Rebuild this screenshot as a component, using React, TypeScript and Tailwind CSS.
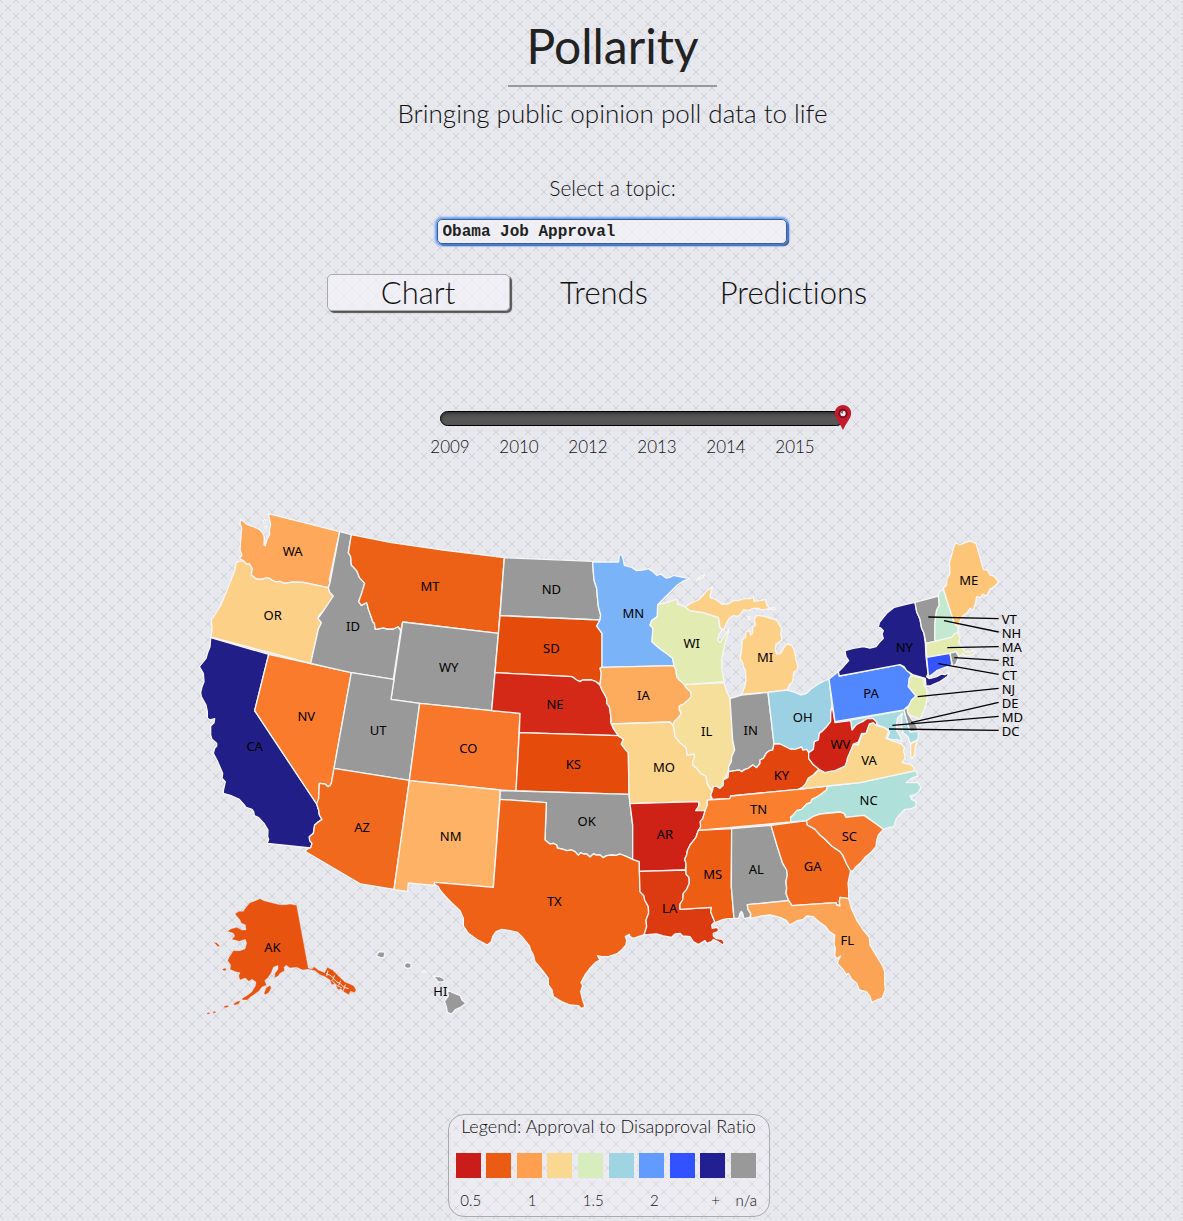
import { useState } from "react";

type StateShape = { id: string; fill: string; d: string; label?: [number, number] };

const GRAY = "#999999";

const STATES: StateShape[] = [
  { id: "WA", fill: "#fda85a", label: [308, 154], d: "M152,58 172,74 190,80 208,88 218,98 223,112 222,135 226,137 231,118 239,103 238,90 242,75 238,55 235,41 449,95 418,240 420,248 415,263 340,247 310,246 282,250 270,244 258,246 245,240 240,236 230,233 215,238 198,237 184,225 186,205 178,192 170,192 160,182 148,176 156,165 150,150 152,120 155,85 150,70ZM219,62 225,58 227,66 221,68ZM224,80 230,78 228,85Z" },
  { id: "OR", fill: "#fdd088", label: [248, 346], d: "M145,184 160,182 170,192 178,192 186,205 184,225 198,237 215,238 230,233 240,236 245,240 258,246 270,244 282,250 310,246 340,247 415,263 419,277 430,288 418,308 400,333 388,345 384,355 394,368 385,388 362,490 62,411 66,392 64,360 76,342 93,315 116,258 134,212 138,190Z" },
  { id: "CA", fill: "#221e87", label: [194, 740], d: "M62,413 236,463 194,632 380,912 386,930 388,945 396,958 382,968 374,975 370,1000 358,1010 359,1022 366,1030 362,1044 232,1030 236,1018 233,1010 234,990 222,970 206,953 193,947 191,935 186,928 168,922 163,915 148,898 126,888 100,880 100,872 106,845 96,835 98,820 83,785 70,760 74,745 80,738 80,730 66,718 62,705 62,678 72,668 74,656 60,660 52,654 52,635 48,615 34,590 32,578 36,560 42,545 40,520 28,500 48,475 54,455 60,440Z" },
  { id: "NV", fill: "#f97b2b", label: [349, 649], d: "M236,463 484,518 432,805 424,850 420,857 414,860 405,852 388,850 386,895 382,915 194,632Z" },
  { id: "ID", fill: GRAY, label: [489, 380], d: "M449,95 484,104 475,158 482,170 484,195 500,212 508,232 524,250 515,280 506,305 514,316 530,308 536,330 545,355 548,365 553,370 556,388 580,384 592,387 610,387 625,380 632,392 610,538 484,518 362,490 385,388 394,368 384,355 400,333 430,288 419,277 415,263 420,248Z" },
  { id: "MT", fill: "#ed6117", label: [720, 259], d: "M484,104 600,127 760,150 943,173 925,400 638,366 632,392 625,380 610,387 592,387 580,384 556,388 553,370 548,365 545,355 536,330 530,308 514,316 506,305 515,280 524,250 508,232 500,212 484,195 482,170 475,158Z" },
  { id: "WY", fill: GRAY, label: [776, 501], d: "M638,366 925,400 905,632 689,610 603,598Z" },
  { id: "UT", fill: GRAY, label: [564, 691], d: "M484,518 612,538 603,598 689,610 658,841 432,805Z" },
  { id: "CO", fill: "#f8772a", label: [835, 745], d: "M689,610 905,632 990,640 978,873 931,870 658,842Z" },
  { id: "AZ", fill: "#f0691d", label: [516, 982], d: "M432,805 658,841 612,1168 512,1152 346,1055 350,1048 362,1043 366,1030 359,1022 358,1010 370,1000 374,975 382,968 396,958 388,945 386,930 380,912 386,895 388,850 405,852 414,860 420,857 424,850Z" },
  { id: "NM", fill: "#feb265", label: [782, 1009], d: "M658,842 931,870 910,1162 735,1147 732,1156 655,1149 653,1174 612,1169Z" },
  { id: "ND", fill: GRAY, label: [1084, 268], d: "M943,173 1208,184 1210,215 1212,240 1220,265 1222,290 1225,320 1232,345 1230,360 930,347Z" },
  { id: "SD", fill: "#e54b0b", label: [1084, 445], d: "M930,347 1230,360 1220,378 1236,400 1236,500 1230,505 1234,520 1230,553 1218,545 1205,540 1178,540 1170,545 1160,540 1146,530 915,518Z" },
  { id: "NE", fill: "#d32916", label: [1095, 613], d: "M915,518 1146,530 1160,540 1170,545 1178,540 1205,540 1218,545 1230,555 1236,570 1242,580 1250,595 1250,610 1258,620 1262,645 1262,665 1270,685 1285,707 988,698 990,640 905,632Z" },
  { id: "KS", fill: "#e54b0b", label: [1150, 793], d: "M988,698 1285,707 1292,712 1300,718 1294,732 1306,748 1315,758 1317,883 978,873Z" },
  { id: "OK", fill: GRAY, label: [1190, 964], d: "M931,872 978,873 1317,883 1320,910 1328,975 1328,1078 1310,1070 1290,1062 1278,1066 1265,1065 1250,1067 1240,1073 1230,1065 1220,1065 1210,1062 1200,1071 1190,1062 1180,1062 1172,1058 1165,1066 1155,1055 1145,1050 1130,1052 1120,1048 1102,1044 1100,1035 1090,1030 1080,1032 1065,1020 1069,908 930,898Z" },
  { id: "TX", fill: "#ee6117", label: [1093, 1204], d: "M930,898 1069,908 1065,1020 1080,1032 1090,1030 1100,1035 1102,1044 1120,1048 1130,1052 1145,1050 1155,1055 1165,1066 1172,1058 1180,1062 1190,1062 1200,1071 1210,1062 1220,1065 1230,1065 1240,1073 1250,1067 1265,1065 1278,1066 1290,1062 1310,1070 1328,1078 1348,1085 1350,1175 1362,1188 1364,1200 1375,1220 1376,1240 1368,1260 1370,1280 1362,1305 1345,1310 1330,1315 1320,1310 1318,1303 1306,1310 1310,1320 1308,1335 1295,1350 1280,1362 1255,1370 1235,1370 1222,1367 1230,1380 1218,1386 1200,1405 1185,1425 1173,1448 1178,1456 1172,1475 1178,1500 1185,1520 1175,1526 1165,1517 1140,1515 1115,1505 1090,1490 1086,1470 1075,1455 1075,1435 1060,1415 1048,1400 1035,1385 1030,1365 1022,1350 1018,1338 1000,1315 982,1297 960,1292 935,1288 918,1295 908,1310 904,1325 892,1335 860,1318 835,1300 820,1278 820,1255 810,1232 785,1208 765,1188 750,1170 745,1160 732,1152 735,1147 910,1162Z" },
  { id: "MN", fill: "#7ab3f8", label: [1330, 340], d: "M1208,186 1286,186 1288,164 1296,166 1300,180 1303,196 1325,202 1340,212 1358,210 1375,206 1390,216 1400,226 1412,222 1428,234 1440,232 1450,226 1475,231 1500,236 1480,243 1462,255 1445,272 1425,292 1403,314 1402,350 1385,362 1380,375 1388,383 1388,395 1386,425 1400,438 1415,450 1432,462 1448,475 1452,497 1236,502 1236,400 1220,378 1230,360 1232,345 1225,320 1222,290 1220,265 1212,240 1210,215Z" },
  { id: "IA", fill: "#fdab5c", label: [1360, 586], d: "M1236,502 1452,497 1458,510 1460,530 1468,540 1475,545 1483,554 1490,565 1502,575 1504,590 1495,600 1480,612 1468,618 1468,628 1474,640 1464,655 1455,662 1448,675 1440,666 1264,672 1262,645 1258,620 1250,610 1250,595 1242,580 1236,570 1230,555 1234,520 1230,505Z" },
  { id: "MO", fill: "#fbd58c", label: [1422, 802], d: "M1264,672 1440,666 1448,675 1452,685 1455,710 1470,728 1486,740 1490,750 1491,765 1512,762 1514,772 1508,785 1508,795 1520,805 1532,820 1548,828 1552,850 1560,865 1567,872 1562,885 1564,898 1552,900 1552,915 1545,932 1517,932 1526,918 1526,905 1320,911 1317,883 1315,758 1306,748 1294,732 1300,718 1285,707 1270,685Z" },
  { id: "IL", fill: "#f6df9b", label: [1550, 694], d: "M1483,554 1602,548 1610,575 1620,595 1628,720 1634,750 1625,770 1624,785 1616,800 1614,818 1606,832 1600,840 1600,855 1590,865 1578,858 1567,872 1560,865 1552,850 1548,828 1532,820 1520,805 1508,795 1508,785 1514,772 1512,762 1491,765 1490,750 1486,740 1470,728 1455,710 1452,685 1448,675 1455,662 1464,655 1474,640 1468,628 1468,618 1480,612 1495,600 1504,590 1502,575 1490,565Z" },
  { id: "WI", fill: "#e2ebb1", label: [1505, 430], d: "M1403,314 1430,308 1458,298 1464,304 1462,312 1485,320 1500,332 1540,338 1570,348 1585,352 1588,365 1588,380 1596,392 1588,402 1583,420 1590,428 1600,412 1618,385 1614,400 1605,430 1600,455 1595,480 1596,510 1602,545 1483,554 1475,545 1468,540 1460,530 1458,510 1452,497 1448,475 1432,462 1415,450 1400,438 1386,425 1388,395 1388,383 1380,375 1385,362 1402,350Z" },
  { id: "MI", fill: "#fdd088", label: [1725, 471], d: "M1485,320 1510,306 1525,300 1540,285 1550,272 1568,262 1562,280 1560,292 1580,300 1595,312 1615,312 1630,302 1645,302 1660,296 1680,296 1690,291 1692,304 1710,302 1727,298 1730,315 1740,325 1755,322 1755,329 1735,327 1715,330 1705,325 1690,325 1675,332 1660,330 1650,345 1640,350 1632,346 1618,355 1608,372 1600,392 1590,380 1588,365 1585,352 1570,348 1540,338 1500,332ZM1520,240 1530,230 1545,222 1542,229 1527,238ZM1655,583 1664,560 1668,540 1666,510 1660,500 1658,488 1650,475 1655,450 1656,420 1668,410 1666,398 1678,390 1682,405 1688,400 1688,382 1696,375 1692,358 1700,346 1720,348 1740,354 1760,360 1766,372 1775,385 1772,400 1776,420 1758,432 1756,450 1760,462 1772,460 1780,445 1790,432 1805,435 1812,448 1816,465 1818,480 1824,500 1820,512 1812,515 1810,530 1808,545 1798,555 1792,570 1734,577ZM1674,350 1680,350 1680,358 1675,358Z" },
  { id: "IN", fill: GRAY, label: [1682, 691], d: "M1620,596 1655,585 1734,577 1752,732 1748,750 1738,752 1730,758 1720,775 1710,780 1710,790 1700,803 1688,795 1675,805 1665,808 1655,815 1648,810 1635,812 1616,815 1616,800 1624,785 1625,770 1634,750 1628,720Z" },
  { id: "OH", fill: "#9bd1e3", label: [1838, 652], d: "M1734,577 1792,570 1812,576 1832,585 1850,580 1862,568 1880,555 1898,545 1917,537 1926,615 1922,640 1922,665 1910,680 1895,695 1888,700 1885,720 1873,725 1870,748 1856,758 1850,748 1838,750 1835,741 1815,748 1800,747 1782,738 1770,732 1752,732Z" },
  { id: "KY", fill: "#e2450d", label: [1774, 826], d: "M1752,732 1770,732 1782,738 1800,747 1815,748 1835,741 1838,750 1850,748 1856,758 1856,775 1868,792 1887,808 1870,825 1855,835 1848,850 1838,862 1825,868 1622,888 1620,896 1567,898 1562,885 1567,872 1570,860 1578,858 1590,865 1600,855 1600,840 1614,832 1616,815 1635,812 1648,810 1655,815 1665,808 1675,805 1688,795 1700,803 1710,790 1710,780 1720,775 1730,758 1738,752 1748,750Z" },
  { id: "TN", fill: "#fa8030", label: [1706, 928], d: "M1552,900 1620,896 1622,888 1825,868 1912,858 1910,870 1890,885 1878,892 1866,898 1862,908 1850,912 1835,928 1820,932 1810,945 1802,952 1802,966 1525,991 1530,965 1538,955 1545,932 1552,915Z" },
  { id: "AR", fill: "#ce2217", label: [1425, 1004], d: "M1320,911 1526,905 1526,918 1517,932 1545,932 1538,955 1530,965 1532,980 1525,991 1518,1012 1508,1025 1500,1035 1492,1052 1490,1065 1484,1078 1488,1090 1486,1110 1348,1114 1348,1085 1328,1078 1328,975Z" },
  { id: "LA", fill: "#dc3b11", label: [1439, 1226], d: "M1348,1114 1488,1110 1488,1122 1497,1132 1498,1150 1490,1168 1480,1180 1478,1200 1470,1212 1470,1228 1564,1222 1562,1235 1568,1250 1575,1265 1565,1275 1567,1285 1580,1282 1588,1290 1580,1296 1570,1300 1570,1308 1580,1316 1597,1318 1603,1328 1598,1335 1586,1326 1570,1318 1565,1325 1550,1330 1545,1322 1525,1334 1510,1325 1500,1310 1478,1308 1470,1300 1455,1302 1445,1312 1420,1308 1400,1302 1362,1305 1370,1280 1368,1260 1376,1240 1375,1220 1364,1200 1362,1188 1350,1175Z" },
  { id: "MS", fill: "#ed5d14", label: [1568, 1123], d: "M1525,991 1625,986 1624,1160 1632,1255 1615,1256 1600,1258 1575,1268 1568,1250 1562,1235 1564,1222 1470,1228 1470,1212 1478,1200 1480,1180 1490,1168 1498,1150 1497,1132 1488,1122 1488,1110 1488,1090 1484,1078 1490,1065 1492,1052 1500,1035 1508,1025 1518,1012Z" },
  { id: "AL", fill: GRAY, label: [1699, 1108], d: "M1625,986 1743,976 1762,1040 1778,1090 1790,1110 1792,1125 1788,1145 1790,1165 1788,1180 1796,1202 1672,1214 1674,1228 1682,1240 1680,1252 1662,1256 1658,1240 1654,1234 1650,1240 1646,1255 1632,1255 1624,1160Z" },
  { id: "GA", fill: "#f0671c", label: [1868, 1100], d: "M1743,976 1850,962 1852,975 1865,982 1875,988 1890,1005 1905,1018 1925,1038 1950,1055 1958,1065 1970,1092 1982,1112 1978,1130 1974,1150 1976,1170 1976,1196 1950,1192 1948,1205 1950,1215 1940,1215 1938,1208 1806,1217 1796,1202 1788,1180 1790,1165 1788,1145 1792,1125 1790,1110 1778,1090 1762,1040Z" },
  { id: "NC", fill: "#afe0da", label: [2036, 901], d: "M1912,858 2010,848 2178,812 2184,828 2165,835 2148,848 2165,848 2184,848 2193,862 2185,878 2172,885 2160,888 2165,898 2178,905 2178,920 2160,927 2145,928 2128,945 2118,958 2112,980 2098,982 2080,988 2050,966 2022,946 1968,952 1962,940 1950,936 1890,942 1850,962 1802,966 1802,952 1810,945 1820,932 1835,928 1850,912 1862,908 1866,898 1878,892 1890,885 1910,870Z" },
  { id: "SC", fill: "#f5762b", label: [1978, 1009], d: "M1850,962 1868,950 1890,942 1950,936 1962,940 1968,952 2022,946 2050,966 2080,988 2065,1005 2060,1022 2058,1040 2040,1060 2025,1072 2015,1085 1998,1100 1987,1115 1980,1110 1970,1092 1958,1065 1950,1055 1925,1038 1905,1018 1890,1005 1875,988 1865,982 1852,975Z" },
  { id: "FL", fill: "#fca456", label: [1972, 1322], d: "M1672,1214 1796,1202 1806,1217 1938,1208 1940,1215 1950,1218 1948,1205 1950,1192 1976,1196 1984,1225 2000,1260 2020,1290 2038,1312 2040,1335 2055,1360 2078,1398 2084,1415 2084,1450 2086,1470 2076,1495 2060,1500 2045,1508 2040,1490 2030,1476 2008,1470 2000,1450 1985,1438 1975,1420 1970,1425 1960,1410 1942,1390 1945,1380 1952,1368 1940,1376 1934,1368 1936,1345 1932,1330 1934,1305 1918,1295 1905,1278 1890,1268 1870,1250 1850,1248 1840,1258 1820,1263 1798,1275 1790,1262 1770,1252 1740,1245 1715,1248 1682,1255 1682,1240 1674,1228Z" },
  { id: "VA", fill: "#fad68f", label: [2037, 782], d: "M1825,868 1838,862 1848,850 1855,835 1870,825 1887,808 1905,818 1920,814 1935,812 1950,805 1965,798 1970,785 1972,775 1985,745 1990,732 2005,735 2015,705 2028,700 2038,672 2050,668 2065,678 2082,682 2096,692 2092,705 2088,715 2105,722 2118,726 2135,732 2143,742 2140,755 2145,765 2145,775 2136,788 2160,793 2170,800 2175,812 2010,848 1912,858ZM2162,732 2181,722 2175,745 2174,765 2166,776 2162,768Z" },
  { id: "MD", fill: "#a8dbdf", d: "M1980,660 2142,630 2160,695 2185,693 2185,715 2178,722 2160,730 2155,712 2148,705 2140,700 2135,680 2135,655 2137,640 2122,655 2120,675 2120,692 2130,708 2136,725 2120,718 2108,720 2092,715 2098,700 2096,690 2082,682 2065,676 2045,655 2020,662 2010,672 1986,688Z" },
  { id: "WV", fill: "#cf2316", label: [1951, 734], d: "M1926,615 1935,668 1982,662 1986,690 1998,675 2010,668 2020,664 2032,655 2050,656 2060,666 2060,678 2050,668 2038,672 2028,700 2015,700 2005,726 1990,732 1985,745 1972,775 1970,785 1965,798 1950,805 1935,812 1920,814 1905,818 1887,808 1868,792 1856,775 1856,758 1870,748 1873,725 1885,720 1888,700 1895,695 1910,680 1922,665 1922,640Z" },
  { id: "PA", fill: "#5288ff", label: [2043, 580], d: "M1917,537 1945,515 1948,528 2130,494 2148,508 2165,525 2158,535 2155,560 2165,572 2178,588 2165,600 2158,615 2142,630 1935,665Z" },
  { id: "NJ", fill: "#e3ebaf", d: "M2165,525 2204,537 2202,555 2210,565 2212,590 2208,615 2200,635 2190,658 2178,652 2160,645 2150,635 2155,620 2165,600 2178,588 2165,572 2155,560 2158,535Z" },
  { id: "DE", fill: GRAY, d: "M2142,630 2150,622 2154,640 2165,658 2180,675 2185,693 2160,696Z" },
  { id: "NY", fill: "#221e87", label: [2143, 442], d: "M2175,307 2180,335 2190,358 2195,385 2202,400 2206,430 2208,470 2214,520 2210,530 2218,536 2240,530 2255,522 2265,524 2277,517 2272,530 2250,545 2232,552 2220,558 2208,558 2206,535 2170,525 2150,512 2142,500 2130,494 1948,528 1945,515 1960,500 1976,482 1968,470 1965,452 1990,445 2020,440 2040,444 2058,440 2070,425 2080,415 2076,402 2080,392 2072,384 2065,382 2068,368 2078,355 2092,338 2113,322 2145,314Z" },
  { id: "VT", fill: GRAY, d: "M2175,307 2245,288 2248,315 2240,330 2237,350 2234,380 2235,424 2208,430 2202,400 2195,385 2190,358 2180,335Z" },
  { id: "NH", fill: "#c4e9d1", d: "M2248,275 2260,268 2272,305 2285,345 2293,370 2305,382 2303,398 2285,412 2235,424 2234,380 2237,350 2240,330 2248,315 2245,288Z" },
  { id: "ME", fill: "#fdc577", label: [2336, 241], d: "M2260,265 2270,255 2270,240 2280,220 2278,190 2285,165 2290,145 2297,128 2310,135 2325,128 2340,123 2358,130 2368,165 2380,208 2392,210 2400,225 2412,228 2426,246 2415,258 2400,268 2390,288 2378,282 2372,292 2360,290 2356,310 2350,330 2340,325 2330,340 2320,345 2312,360 2305,382 2293,370 2285,345 2272,305Z" },
  { id: "MA", fill: "#e3ebaf", d: "M2208,430 2235,424 2285,412 2295,400 2305,398 2310,415 2305,428 2315,440 2325,455 2338,458 2345,452 2358,455 2350,463 2335,466 2325,468 2320,460 2308,470 2300,456 2280,460 2210,472Z" },
  { id: "CT", fill: "#3354ff", d: "M2210,472 2280,460 2286,495 2265,502 2240,512 2228,522 2216,530 2214,515Z" },
  { id: "RI", fill: GRAY, d: "M2280,460 2298,455 2306,470 2298,492 2288,498Z" },
  { id: "AK", fill: "#e85310", label: [247, 1342], d: "M320,1216 355,1404 366,1407 372,1400 385,1410 404,1418 412,1402 428,1410 440,1422 450,1432 465,1446 480,1452 492,1458 498,1470 494,1478 482,1474 476,1484 462,1476 452,1466 444,1470 436,1452 425,1454 420,1440 405,1430 390,1424 375,1412 355,1408 338,1410 320,1402 300,1404 288,1396 282,1402 284,1412 270,1420 265,1428 253,1434 255,1420 264,1408 264,1396 250,1402 244,1418 235,1432 224,1442 230,1455 215,1462 208,1472 195,1482 180,1492 172,1500 158,1500 155,1496 172,1486 185,1476 196,1458 198,1446 186,1438 176,1444 166,1434 150,1440 146,1428 150,1418 136,1415 120,1408 122,1395 113,1382 118,1370 130,1352 150,1352 165,1347 170,1330 166,1318 148,1324 125,1318 134,1308 130,1300 112,1294 124,1286 140,1282 156,1290 168,1290 166,1274 154,1270 150,1260 135,1242 146,1234 160,1234 166,1224 180,1208 196,1202 210,1196 222,1202 245,1208 270,1214 288,1214 300,1212ZM222,1480 228,1464 240,1456 244,1464 236,1478 226,1484ZM130,1512 142,1504 152,1502 146,1512 134,1516ZM102,1518 114,1516 116,1521 104,1524ZM68,1326 80,1328 90,1338 84,1340 74,1330ZM96,1408 106,1404 110,1410 102,1413ZM50,1540 58,1537 60,1542 52,1543ZM68,1536 76,1533 78,1538 70,1540Z" },
  { id: "HI", fill: GRAY, label: [751, 1474], d: "M561,1361 568,1355 583,1356 585,1362 581,1373 570,1372 561,1369ZM643,1393 652,1387 663,1391 663,1403 652,1406 644,1401ZM696,1413 707,1412 707,1416 698,1417ZM728,1428 742,1430 748,1429 763,1437 761,1445 744,1446 737,1436ZM772,1470 790,1479 811,1487 816,1500 828,1510 813,1521 796,1529 785,1542 772,1537 769,1520 763,1504 775,1488Z" },
];

const CALLOUTS: { id: string; from: [number, number]; y: number }[] = [
  { id: "VT", from: [2215, 351], y: 356 },
  { id: "NH", from: [2262, 362], y: 396 },
  { id: "MA", from: [2272, 443], y: 440 },
  { id: "RI", from: [2293, 473], y: 481 },
  { id: "CT", from: [2245, 491], y: 523 },
  { id: "NJ", from: [2183, 590], y: 565 },
  { id: "DE", from: [2163, 668], y: 607 },
  { id: "MD", from: [2107, 676], y: 649 },
  { id: "DC", from: [2097, 687], y: 691 },
];

const LEGEND = [
  { color: "#ca1c19", label: "0.5" },
  { color: "#ec5b13", label: "" },
  { color: "#fea050", label: "1" },
  { color: "#fbd892", label: "" },
  { color: "#d7edbd", label: "1.5" },
  { color: "#9fd4e2", label: "" },
  { color: "#629bff", label: "2" },
  { color: "#3052ff", label: "" },
  { color: "#221f93", label: "+" },
  { color: "#999999", label: "n/a" },
];

const YEARS = ["2009", "2010", "2012", "2013", "2014", "2015"];

function UsMap() {
  return (
    <svg viewBox="0 0 2520 1590" className="mt-[41px] mr-[5px] w-full max-w-[840px]" role="img" aria-label="Approval by state">
      <g stroke="#f6f6f8" strokeWidth="4" strokeLinejoin="round">
        {STATES.map((s) => (
          <path key={s.id} d={s.d} fill={s.fill} strokeWidth={s.id === "AK" ? 1 : 4} />
        ))}
      </g>
      {/* channels between the islands of the Alaskan panhandle */}
      <g stroke="#efe9ea" strokeWidth="3" fill="none">
        <path d="M408,1420 424,1428 438,1444 452,1452 462,1462 476,1466M424,1440 440,1456 456,1464M414,1412 410,1428M434,1426 428,1440M452,1442 446,1456M466,1454 460,1472" />
      </g>
      <g stroke="#000" strokeWidth="4">
        {CALLOUTS.map((c) => (
          <line key={c.id} x1={c.from[0]} y1={c.from[1]} x2="2426" y2={c.y} />
        ))}
      </g>
      <g className="font-['Noto_Sans',sans-serif] text-[39px] font-normal" fill="#000">
        {STATES.filter((s) => s.label).map((s) => (
          <text key={s.id} x={s.label![0]} y={s.label![1] + 14} textAnchor="middle">
            {s.id}
          </text>
        ))}
        {CALLOUTS.map((c, i) => (
          <text key={c.id} x="2435" y={371 + i * 42}>
            {c.id}
          </text>
        ))}
      </g>
    </svg>
  );
}

function Timeline() {
  const [value, setValue] = useState(100);
  return (
    <div className="mt-[100px] ml-[34px] w-full max-w-[428px]">
      <div className="relative ml-6 h-[15px] rounded-full border border-black bg-[#565656] shadow-[inset_0_2px_3px_#333]">
        <svg
          viewBox="0 0 17 25"
          className="absolute -top-[7px] h-[25px] w-[17px] -translate-x-1/2"
          style={{ left: `${value}%` }}
          aria-hidden="true"
        >
          <path d="M8.500 0C3.800 0 .3 3.700 .3 8.300C.3 13 5 17.500 8.500 25C12 17.500 16.700 13 16.700 8.300C16.700 3.700 13.200 0 8.500 0Z" fill="#c41a2b" />
          <circle cx="8.500" cy="8.500" r="3.700" fill="#e8e8ee" stroke="#7d0d1a" strokeWidth="2" />
          <path d="M6 7L8.500 5.500L8 9Z" fill="#555" />
        </svg>
        <input
          type="range"
          aria-label="Year"
          min={0}
          max={100}
          value={value}
          onChange={(e) => setValue(Number(e.target.value))}
          className="absolute inset-0 h-full w-full cursor-pointer opacity-0"
        />
      </div>
      <ol className="mt-[9px] mr-[14px] grid grid-cols-6 text-center text-[17px] leading-6">
        {YEARS.map((y) => (
          <li key={y}>{y}</li>
        ))}
      </ol>
    </div>
  );
}

export default function App() {
  const [topic, setTopic] = useState("Obama Job Approval");
  return (
    <main className="flex min-h-screen flex-col items-center overflow-hidden bg-[#e7e7ee] bg-[radial-gradient(circle,#e7e7ee_1px,transparent_2px),linear-gradient(45deg,transparent_48%,#d0d0d5_49%,#d0d0d5_51%,transparent_52%),linear-gradient(135deg,transparent_48%,#d0d0d5_49%,#d0d0d5_51%,transparent_52%)] bg-size-[8px_8px,16px_16px,16px_16px] pt-4 pb-1 pl-[42px] font-['Lato',sans-serif] font-light text-[#111] [font-variant-ligatures:none]">
      <h1 className="text-[48px] leading-[60px] font-normal text-[#222]">Pollarity</h1>
      <hr className="mt-[9px] h-[2px] w-[209px] border-0 bg-[#999]" />
      <p className="mt-[10px] text-[26px] leading-8">Bringing public opinion poll data to life</p>
      <label htmlFor="topic" className="mt-[45px] text-[21px] leading-7">
        Select a topic:
      </label>
      <input
        id="topic"
        type="text"
        value={topic}
        onChange={(e) => setTopic(e.target.value)}
        className="mt-[17px] mr-[2px] h-[25px] w-[350px] rounded-[5px] border border-[#3b5f8f] bg-[#f2f2f8]/70 px-[5px] font-['Liberation_Mono',monospace] text-base font-bold text-[#222] shadow-[0_0_2px_2px_rgba(77,144,254,0.85),2px_2px_1px_0px_#333] outline-none"
      />
      <nav className="mt-[30px] mr-[10px] flex justify-center gap-[3px] text-[31px] leading-[34px]">
        <button className="flex h-[37px] w-[183px] justify-center rounded-[5px] border border-[#aaa] bg-[#f4f2f9]/70 shadow-[2px_2px_1px_#555]">
          Chart
        </button>
        <button className="flex h-[37px] w-[183px] justify-center border border-transparent">Trends</button>
        <button className="flex h-[37px] w-[190px] justify-center border border-transparent">Predictions</button>
      </nav>
      <Timeline />
      <UsMap />
      <section className="mt-[84px] mr-2 w-full max-w-[322px] rounded-[16px] border border-[#aaa] bg-white/20 px-[7px] pb-1">
        <h2 className="text-center text-[18px] leading-[22px]">Legend: Approval to Disapproval Ratio</h2>
        <ul className="mt-4 grid grid-cols-10">
          {LEGEND.map((l) => (
            <li key={l.color}>
              <div className="h-[25px] w-[25px]" style={{ backgroundColor: l.color }} />
              <div className="mt-[10px] h-6 text-center text-[15px] leading-6">{l.label}</div>
            </li>
          ))}
        </ul>
      </section>
    </main>
  );
}
